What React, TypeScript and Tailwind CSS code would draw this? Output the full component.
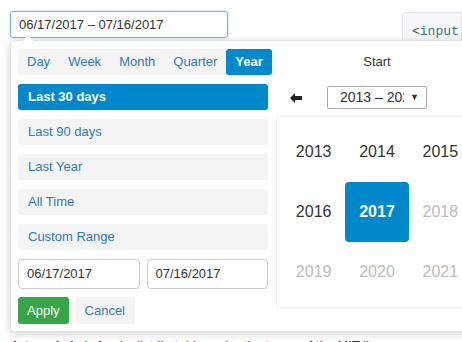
import { useState } from 'react';

const TABS = ['Day', 'Week', 'Month', 'Quarter', 'Year'];
const RANGES = ['Last 30 days', 'Last 90 days', 'Last Year', 'All Time', 'Custom Range'];
const YEARS = [2013, 2014, 2015, 2016, 2017, 2018, 2019, 2020, 2021];

export default function App() {
  const [activeTab, setActiveTab] = useState('Year');
  const [activeRange, setActiveRange] = useState('Last 30 days');
  const [year, setYear] = useState(2017);

  return (
    <div className="relative w-[462px] h-[342px] overflow-hidden bg-white font-['Liberation_Sans',Arial,sans-serif] text-[13px] text-[#333]">
      {/* Page content behind the picker */}
      <div className="flex items-start justify-between pt-[11px] pl-[10px]">
        <div className="w-[218px] h-[27px] border border-[#7fb0e3] rounded-[3px] px-[8px] flex items-center shadow-[0_0_3px_rgba(102,175,233,0.5)]">
          06/17/2017 – 07/16/2017
        </div>
        <div className="w-[60px] h-[40px] mt-[1px] bg-[#f7f7f9] border border-[#e1e1e8] rounded-l-[4px] pl-[9px] pt-[12px] font-['Liberation_Mono',monospace] text-[13px] leading-none whitespace-nowrap">
          <span className="text-[#555]">&lt;</span>
          <span className="text-[#2f7a78]">input</span>
        </div>
      </div>
      <p className="mt-[284px] pl-[13px] whitespace-nowrap text-[13px] text-[#333]">
        <strong>Intervals.js</strong> is freely distributable under the terms of the MIT license.
      </p>

      {/* Dropdown picker */}
      <div className="absolute left-[10px] top-[40px] w-[478px] bg-white border border-[#e2e2e2] rounded-[4px] shadow-[0_2px_8px_rgba(0,0,0,0.18)] px-[7px] pt-[8px] pb-[7px] flex gap-[8px]">
        {/* caret */}
        <div className="absolute -top-[6px] left-[10px] w-0 h-0 border-x-[7px] border-x-transparent border-b-[6px] border-b-[#d8d8d8]" />
        <div className="absolute -top-[5px] left-[11px] w-0 h-0 border-x-[6px] border-x-transparent border-b-[5px] border-b-white" />

        {/* Left column */}
        <div className="w-[250px] flex flex-col">
          <div className="flex h-[26px] bg-[#f4f4f4] rounded-[3px]">
            {TABS.map((t) => (
              <button
                key={t}
                onClick={() => setActiveTab(t)}
                className={`px-[9px] rounded-[3px] leading-[26px] ${
                  t === 'Year' ? 'ml-auto' : ''
                } ${activeTab === t ? 'bg-[#0088cc] text-white font-bold' : 'text-[#3278b7]'}`}
              >
                {t}
              </button>
            ))}
          </div>

          <div className="flex flex-col gap-[9px] mt-[9px]">
            {RANGES.map((r) => (
              <button
                key={r}
                onClick={() => setActiveRange(r)}
                className={`h-[26px] rounded-[3px] px-[10px] text-left ${
                  activeRange === r ? 'bg-[#0088cc] text-white font-bold' : 'bg-[#f4f4f4] text-[#3278b7]'
                }`}
              >
                {r}
              </button>
            ))}
          </div>

          <div className="flex gap-[7px] mt-[9px]">
            <div className="flex-1 h-[30px] border border-[#ccc] rounded-[4px] px-[8px] flex items-center">06/17/2017</div>
            <div className="flex-1 h-[30px] border border-[#ccc] rounded-[4px] px-[8px] flex items-center">07/16/2017</div>
          </div>

          <div className="flex gap-[6px] mt-[8px]">
            <button className="h-[27px] px-[9px] rounded-[3px] bg-[#37a549] text-white">Apply</button>
            <button className="h-[27px] px-[10px] rounded-[3px] bg-[#f4f4f4] text-[#3278b7]">Cancel</button>
          </div>
        </div>

        {/* Right column */}
        <div className="w-[202px] flex flex-col">
          <div className="h-[26px] flex items-center justify-center text-[#333]">Start</div>
          <div className="relative h-[23px] mt-[11px] flex justify-center">
            <svg className="absolute left-[14px] top-[7px]" width="12" height="10" viewBox="0 0 12 10">
              <path d="M0 5 L5 0 L5 3 L12 3 L12 7 L5 7 L5 10 Z" fill="#222" />
            </svg>
            <div className="w-[100px] h-[23px] border border-[#aaa] rounded-[2px] flex items-center pl-[12px] relative">
              <span className="w-[64px] overflow-hidden whitespace-nowrap text-[14px]">2013 – 2021</span>
              <span className="ml-auto mr-[7px] text-[9px]">▼</span>
            </div>
          </div>
          <div className="mt-[7px] border border-[#eee] rounded-[4px] p-[5px] grid grid-cols-3">
            {YEARS.map((y) => (
              <button
                key={y}
                onClick={() => setYear(y)}
                className={`h-[60px] rounded-[4px] text-[16px] ${
                  y === year
                    ? 'bg-[#0088cc] text-white font-semibold'
                    : y > 2017
                    ? 'text-[#bbb]'
                    : 'text-[#333]'
                }`}
              >
                {y}
              </button>
            ))}
          </div>
        </div>
      </div>
    </div>
  );
}
